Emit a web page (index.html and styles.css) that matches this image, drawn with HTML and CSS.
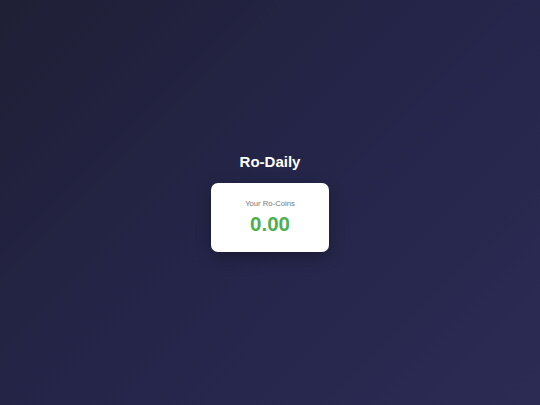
FILE: index.html
```html
<!DOCTYPE html>
<html lang="en">
<head>
<meta charset="utf-8">
<title>Ro-Daily</title>
<link rel="stylesheet" href="styles.css">
</head>
<body>
<main class="app">
  <h1 class="title">Ro-Daily</h1>
  <section class="balance-card">
    <p class="balance-label">Your Ro-Coins</p>
    <p class="balance-value">0.00</p>
  </section>
</main>
</body>
</html>
```

FILE: styles.css
```css
html, body {
  margin: 0;
  padding: 0;
  height: 100%;
}

body {
  background: linear-gradient(135deg, #1f1f35 0%, #25254a 50%, #2b2b54 100%);
  font-family: "Liberation Sans", Arial, sans-serif;
  color: #fff;
}

.app {
  height: 100%;
  display: flex;
  flex-direction: column;
  align-items: center;
  justify-content: center;
}

.title {
  margin: 0 0 13px 0;
  font-size: 15px;
  font-weight: bold;
  line-height: 17px;
  color: #ffffff;
}

.balance-card {
  box-sizing: border-box;
  width: 118px;
  height: 69px;
  background: #ffffff;
  border-radius: 7px;
  box-shadow: 0 5px 15px rgba(0, 0, 0, 0.3);
  display: flex;
  flex-direction: column;
  align-items: center;
  padding-top: 16px;
  gap: 4px;
}

.balance-label {
  margin: 0;
  font-size: 7.7px;
  line-height: 9px;
  color: #777777;
}

.balance-value {
  margin: 0;
  font-size: 20.5px;
  line-height: 23px;
  font-weight: bold;
  color: #4caf50;
}
```
